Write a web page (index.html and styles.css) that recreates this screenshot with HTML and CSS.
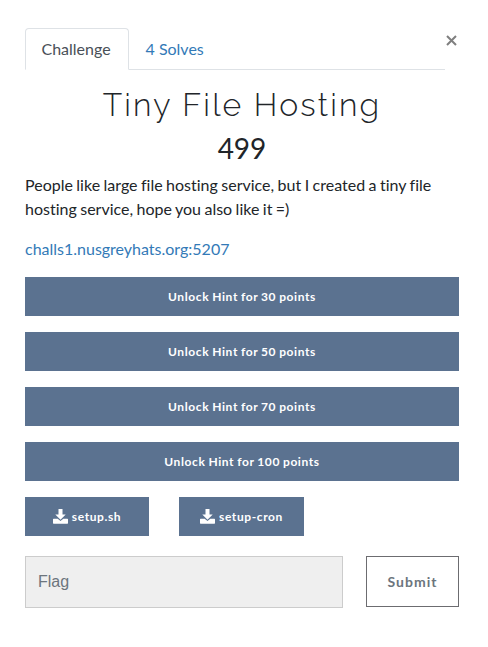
FILE: index.html
```html
<!DOCTYPE html>
<html lang="en">
<head>
<meta charset="utf-8">
<title>Tiny File Hosting</title>
<link rel="stylesheet" href="styles.css">
</head>
<body>
<main class="modal">
  <header class="top">
    <nav class="tabs"><a class="tab active">Challenge</a><a class="tab">4 Solves</a></nav>
    <button class="close" aria-label="Close"><svg width="11" height="11" viewBox="0 0 11 11"><path d="M1 1 10 10M10 1 1 10"/></svg></button>
  </header>
  <h2 class="title">Tiny File Hosting</h2>
  <h3 class="value">499</h3>
  <p class="desc">People like large file hosting service, but I created a tiny file<br>hosting service, hope you also like it =)</p>
  <p class="link"><a>challs1.nusgreyhats.org:5207</a></p>
  <div class="hints">
    <button class="btn">Unlock Hint for 30 points</button>
    <button class="btn">Unlock Hint for 50 points</button>
    <button class="btn">Unlock Hint for 70 points</button>
    <button class="btn">Unlock Hint for 100 points</button>
  </div>
  <div class="files">
    <button class="btn file"><svg class="icon" viewBox="0 0 15 15"><path d="M5.500 0h4v5.500h3.200L7.500 10.800 2.300 5.500h3.200zM.5 9.700h4.200l2.800 2.300 2.800-2.300h4.200l.5.500v4l-.5.500H.5L0 14.200v-4z"/></svg><span>setup.sh</span></button>
    <button class="btn file"><svg class="icon" viewBox="0 0 15 15"><path d="M5.500 0h4v5.500h3.200L7.500 10.800 2.300 5.500h3.200zM.5 9.700h4.200l2.800 2.300 2.800-2.300h4.200l.5.500v4l-.5.500H.5L0 14.200v-4z"/></svg><span>setup-cron</span></button>
  </div>
  <form class="answer">
    <input class="flag" type="text" placeholder="Flag">
    <button class="submit" type="button">Submit</button>
  </form>
</main>
</body>
</html>
```
FILE: styles.css
```css
* { box-sizing: border-box; }
body { margin: 0; background: #fff; color: #212529; font: 16px/24px Lato, sans-serif; font-variant-ligatures: none; }
.modal { padding: 28px 29px 0 25px; }
.top { display: flex; height: 42px; }
.tabs { display: flex; width: 420px; border-bottom: 1px solid #dee2e6; }
.tab { height: 42px; padding: 8px 15.5px; border: 1px solid transparent; color: #337ab7; }
.tab.active { width: 104px; color: #495057; background: #fff; border-color: #dee2e6 #dee2e6 #fff; border-radius: 4px 4px 0 0; }
.close { width: 11px; height: 11px; margin: 7px 0 0 1px; padding: 0; border: 0; background: none; display: flex; }
.close path { stroke: #7f7f7f; stroke-width: 2; fill: none; }
.title { margin: 16px 0 0; text-align: center; font: 350 32px/38px Raleway, Lato, sans-serif; letter-spacing: 2.15px; }
.value { margin: 7px 0 0; text-align: center; font: 400 28px/34px Lato, sans-serif; }
.desc { margin: 8px 0 16px; white-space: nowrap; word-spacing: -.65px; }
.link { margin: 0 0 16px; color: #337ab7; }
.hints { display: grid; gap: 16px; }
.btn { height: 39px; padding: 0; border: 0; background: #5b7290; color: #fff; font: 700 12px/18px Lato, sans-serif; letter-spacing: .6px; word-spacing: -.5px; }
.files { display: flex; gap: 30px; margin-top: 16px; }
.file { display: flex; align-items: center; justify-content: center; gap: 4px; width: 124px; }
.file + .file { width: 125px; }
.icon { width: 15px; height: 15px; margin-top: -1px; fill: #fff; }
.answer { display: flex; justify-content: space-between; margin-top: 20px; }
.flag { width: 318px; height: 52px; padding: 0 12px; border: 1px solid #ccc; border-radius: 0; background: #efefef; font: 16px "Liberation Sans", sans-serif; }
.flag::placeholder { color: #6c757d; }
.submit { width: 93px; height: 51px; padding: 0; border: 1px solid #6c6c70; background: #fff; color: #6c757d; font: 700 14px Lato, sans-serif; letter-spacing: 1px; }
```
